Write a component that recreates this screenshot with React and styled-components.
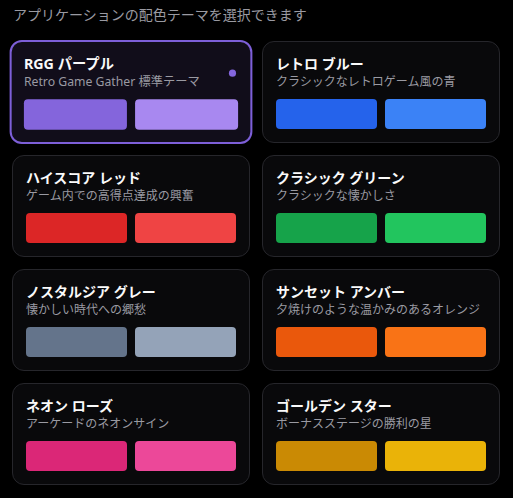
import React, { useState } from 'react';
import styled, { createGlobalStyle, css } from 'styled-components';

const GlobalStyle = createGlobalStyle`
  html, body {
    margin: 0;
    padding: 0;
    background: #000000;
  }
  body {
    font-family: "Noto Sans", "Noto Sans CJK JP", sans-serif;
    -webkit-font-smoothing: antialiased;
  }
  * {
    box-sizing: border-box;
  }
`

const Wrapper = styled.div`
  padding: 4px 13px 14px 12px;
  background: #000000;
  min-height: 498px;
`

const Caption = styled.p`
  margin: 0 0 15px 1px;
  font-size: 14px;
  line-height: 22px;
  color: #9a9aa2;
`

const Grid = styled.div`
  display: grid;
  grid-template-columns: 1fr 1fr;
  column-gap: 12px;
  row-gap: 12px;
`

const Card = styled.button`
  position: relative;
  display: flex;
  flex-direction: column;
  text-align: left;
  padding: 13px;
  border-radius: 12px;
  border: 1px solid #26262b;
  background: #09090b;
  font-family: inherit;
  cursor: pointer;
  transition: transform 0.15s ease;

  &:hover {
    border-color: #3f3f46;
  }

  ${props => props.selected && css`
    border: 2px solid #7d5fd8;
    padding: 12px;
    background: #110d1a;
    transform: scale(1.02);
    &:hover {
      border-color: #7d5fd8;
    }
  `}
`

const Title = styled.div`
  font-size: 14px;
  line-height: 18px;
  font-weight: 700;
  color: #fafafa;
`

const Description = styled.div`
  margin-top: 1px;
  font-size: 12px;
  line-height: 16px;
  color: #9a9aa2;
  white-space: nowrap;
`

const Swatches = styled.div`
  display: flex;
  gap: 8px;
  margin-top: 9px;
`

const Swatch = styled.div`
  flex: 1;
  height: 30px;
  border-radius: 4px;
  background: ${props => props.color};
`

const Dot = styled.span`
  position: absolute;
  top: 27px;
  right: 14px;
  width: 7px;
  height: 7px;
  border-radius: 50%;
  background: #8466de;
`

const themes = [
  { id: 'purple', name: 'RGG パープル', desc: 'Retro Game Gather 標準テーマ', colors: ['#8465dc', '#a888f0'] },
  { id: 'blue', name: 'レトロ ブルー', desc: 'クラシックなレトロゲーム風の青', colors: ['#2563eb', '#3b82f6'] },
  { id: 'red', name: 'ハイスコア レッド', desc: 'ゲーム内での高得点達成の興奮', colors: ['#dc2626', '#ef4444'] },
  { id: 'green', name: 'クラシック グリーン', desc: 'クラシックな懐かしさ', colors: ['#16a34a', '#22c55e'] },
  { id: 'gray', name: 'ノスタルジア グレー', desc: '懐かしい時代への郷愁', colors: ['#64748b', '#94a3b8'] },
  { id: 'amber', name: 'サンセット アンバー', desc: '夕焼けのような温かみのあるオレンジ', colors: ['#ea580c', '#f97316'] },
  { id: 'rose', name: 'ネオン ローズ', desc: 'アーケードのネオンサイン', colors: ['#db2777', '#ec4899'] },
  { id: 'gold', name: 'ゴールデン スター', desc: 'ボーナスステージの勝利の星', colors: ['#ca8a04', '#eab308'] },
];

const App = () => {
  const [selected, setSelected] = useState('purple');

  return (
    <Wrapper>
      <GlobalStyle />
      <Caption>アプリケーションの配色テーマを選択できます</Caption>
      <Grid>
        {themes.map(theme => (
          <Card
            key={theme.id}
            selected={selected === theme.id}
            onClick={() => setSelected(theme.id)}>
            <Title>{theme.name}</Title>
            <Description>{theme.desc}</Description>
            <Swatches>
              {theme.colors.map(c => <Swatch key={c} color={c} />)}
            </Swatches>
            {selected === theme.id && <Dot />}
          </Card>
        ))}
      </Grid>
    </Wrapper>
  );
};

export default App;
